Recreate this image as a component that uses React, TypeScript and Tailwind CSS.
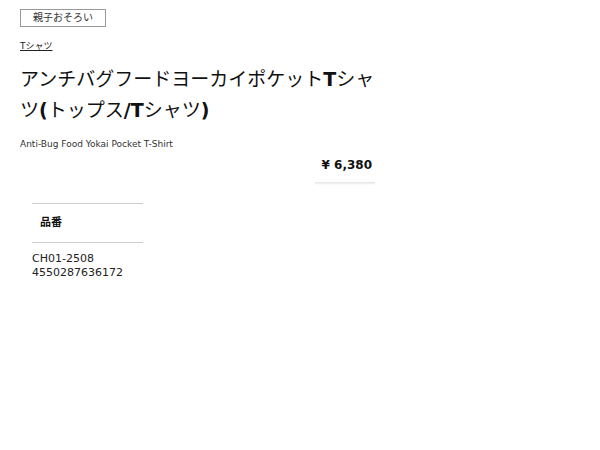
export default function App() {
  return (
    <div className="w-[600px] h-[450px] bg-white text-[#111] font-['DejaVu_Sans','Noto_Sans_CJK_JP',sans-serif]">
      <div className="w-[355px] ml-[20px] pt-[9px]">
        {/* Tag */}
        <div className="w-[86px] h-[18px] border border-[#999] flex items-center justify-center text-[10px] text-[#333] leading-none">
          親子おそろい
        </div>

        {/* Category */}
        <a href="#" className="block mt-[13px] text-[9px] leading-[12px] text-[#222] underline w-fit">
          Tシャツ
        </a>

        {/* Title */}
        <h1 className="mt-[12px] w-[362px] text-[19px] leading-[31px] text-[#111]">
          アンチバグフードヨーカイポケット<b>T</b>シャツ<b>(</b>トップス<b>/T</b>シャツ<b>)</b>
        </h1>

        {/* English name */}
        <p className="mt-[12px] text-[9px] leading-[12px] text-[#333]">
          Anti-Bug Food Yokai Pocket T-Shirt
        </p>

        {/* Price */}
        <div className="flex justify-end mt-[6px]">
          <div className="flex flex-col items-end">
            <span className="text-[12px] font-bold leading-[18px] pr-[3px]">¥ 6,380</span>
            <div className="mt-[8px] w-[60px] h-[3px] bg-gradient-to-b from-[#e2e2e2] to-white" />
          </div>
        </div>

        {/* Spec table */}
        <div className="ml-[12px] mt-[18px] w-[111px]">
          <div className="border-t border-[#ccc] h-[39px] flex items-center pl-[8px] text-[11px] font-bold">
            品番
          </div>
          <div className="border-t border-[#ccc] pt-[9px] text-[11px] leading-[14px] text-[#222]">
            <div>CH01-2508</div>
            <div>4550287636172</div>
          </div>
        </div>
      </div>
    </div>
  );
}
